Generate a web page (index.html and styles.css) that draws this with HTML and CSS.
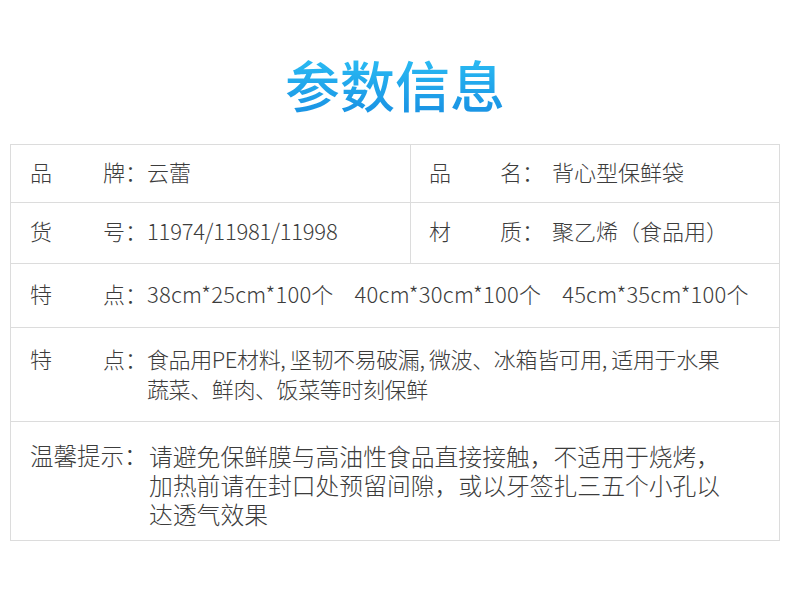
FILE: index.html
```html
<!DOCTYPE html>
<html lang="zh-CN">
<head>
<meta charset="utf-8">
<link rel="stylesheet" href="styles.css">
</head>
<body>
<div class="page">
  <h1 class="title">参数信息</h1>
  <div class="table">
    <div class="row r1">
      <div class="cell left"><span class="k1">品</span><span class="k2">牌：</span><span class="v">云蕾</span></div>
      <div class="cell right"><span class="k1r">品</span><span class="k2r">名：</span><span class="v">背心型保鲜袋</span></div>
    </div>
    <div class="row r2">
      <div class="cell left"><span class="k1">货</span><span class="k2">号：</span><span class="v num">11974/11981/11998</span></div>
      <div class="cell right"><span class="k1r">材</span><span class="k2r">质：</span><span class="v">聚乙烯（食品用）</span></div>
    </div>
    <div class="row r3">
      <div class="cell full"><span class="k1">特</span><span class="k2">点：</span><span class="v sizes"><span class="sz">38cm*25cm*100个</span><span class="sz">40cm*30cm*100个</span><span class="sz">45cm*35cm*100个</span></span></div>
    </div>
    <div class="row r4">
      <div class="cell full top"><span class="k1">特</span><span class="k2">点：</span><span class="v multi">食品用PE材料, 坚韧不易破漏, 微波、冰箱皆可用, 适用于水果<br>蔬菜、鲜肉、饭菜等时刻保鲜</span></div>
    </div>
    <div class="row r5">
      <div class="cell full top"><span class="k5">温馨提示：</span><span class="v multi5">请避免保鲜膜与高油性食品直接接触，不适用于烧烤，<br>加热前请在封口处预留间隙，或以牙签扎三五个小孔以<br>达透气效果</span></div>
    </div>
  </div>
</div>
</body>
</html>
```
FILE: styles.css
```css
html, body {
  margin: 0;
  padding: 0;
  background: #ffffff;
}
body {
  font-family: "Noto Sans CJK SC", "Noto Sans", sans-serif;
  color: #3c3c3c;
}
.page {
  width: 790px;
  height: 605px;
}
.title {
  margin: 0;
  height: 144px;
  box-sizing: border-box;
  padding-top: 45px;
  text-align: center;
  font-size: 55px;
  line-height: 76px;
  font-weight: 500;
  background: linear-gradient(180deg, #2ec6f7 30%, #1b96e5 75%);
  -webkit-background-clip: text;
  background-clip: text;
  color: transparent;
}
.table {
  margin-left: 10px;
  width: 770px;
  box-sizing: border-box;
  border: 1px solid #dcdcdc;
}
.row {
  display: grid;
  grid-template-columns: 400px 1fr;
  border-top: 1px solid #dcdcdc;
}
.row.r1 { border-top: none; height: 57px; }
.row.r2 { height: 60px; }
.row.r3 { height: 63px; }
.row.r4 { height: 93px; }
.row.r5 { height: 118px; }
.cell {
  display: flex;
  align-items: center;
  font-size: 22px;
  font-weight: 300;
  white-space: nowrap;
  padding-bottom: 6px;
  box-sizing: border-box;
}
.cell.left {
  padding-left: 19px;
  border-right: 1px solid #dcdcdc;
}
.cell.right {
  padding-left: 18px;
}
.cell.full {
  grid-column: 1 / 3;
  padding-left: 19px;
}
.cell.top {
  align-items: flex-start;
  padding-bottom: 0;
}
.r4 .cell.top { padding-top: 15px; }
.r5 .cell.top { padding-top: 19px; }
.k1 { width: 73px; }
.k2 { width: 44px; }
.k1r { width: 71px; }
.k2r { width: 52px; }
.k5 { width: 119px; font-size: 23.5px; line-height: 29px; }
.num { letter-spacing: -0.2px; }
.sizes { display: flex; gap: 21px; }
.sz { letter-spacing: 0.2px; }
.multi { line-height: 30px; letter-spacing: -0.4px; }
.multi5 { line-height: 29px; font-size: 23.8px; }
.r4 .k1, .r4 .k2 { line-height: 30px; }
```
